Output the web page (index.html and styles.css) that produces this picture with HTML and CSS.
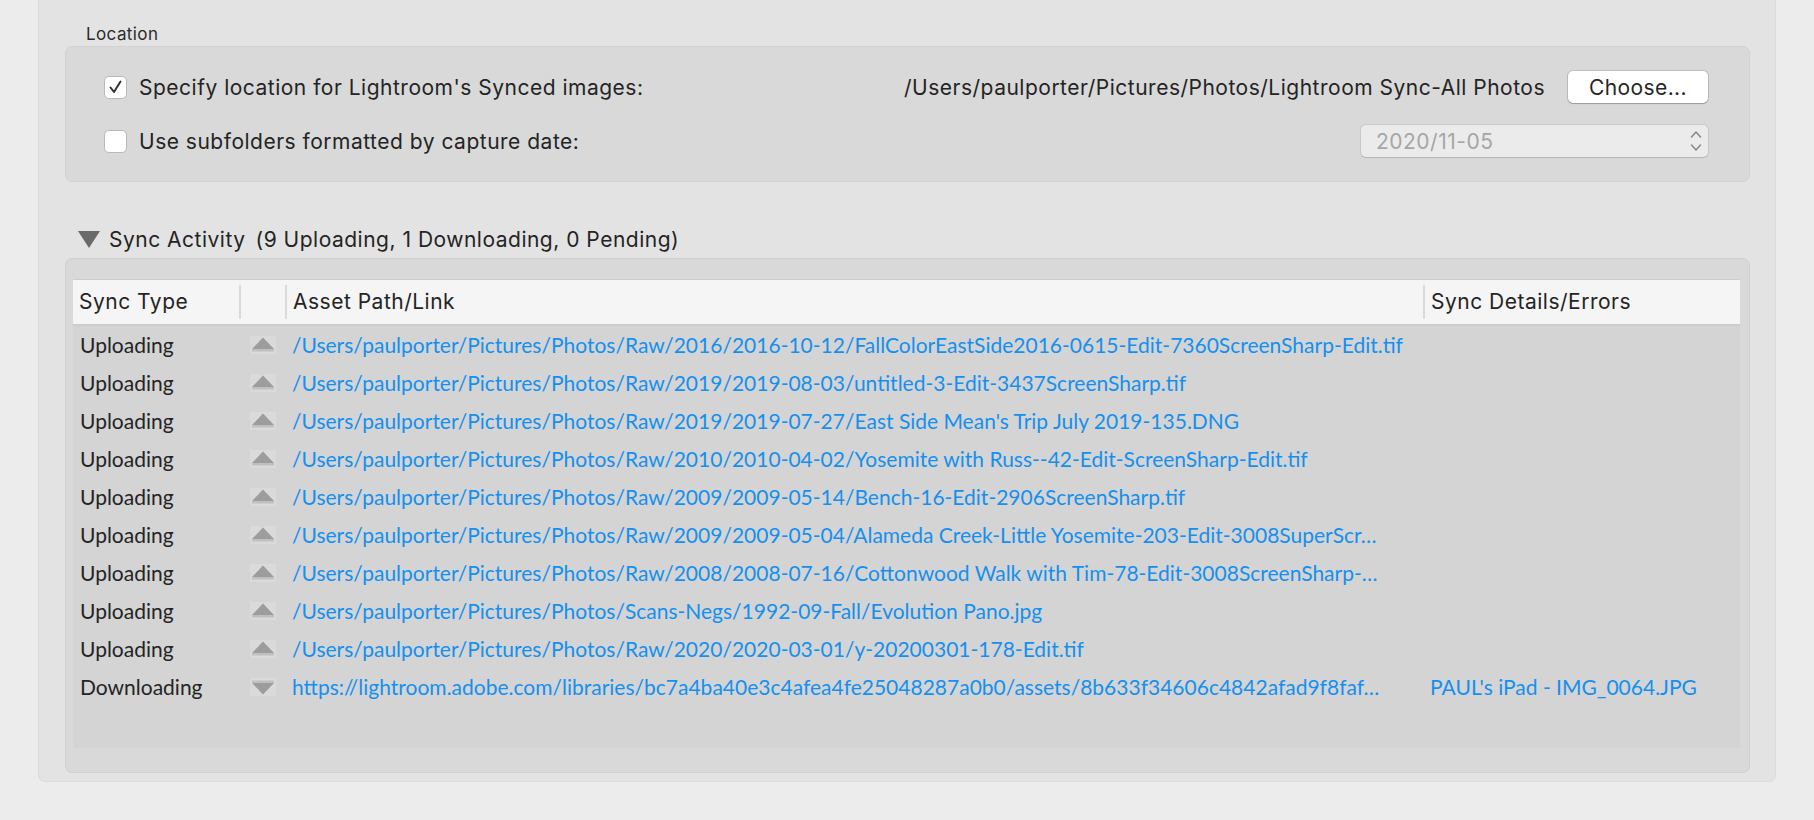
FILE: index.html
```html
<!DOCTYPE html>
<html lang="en">
<head>
    <meta charset="UTF-8">
    <title>Lightroom Sync Preferences</title>
    <link rel="stylesheet" href="styles.css">
</head>
<body>
    <div class="panel">
        <div class="group_label">Location</div>
        <div class="location_box">
            <div class="loc_row">
                <label class="check_item">
                    <span class="checkbox checked">
                        <svg width="15" height="14" viewBox="0 0 15 14"><path d="M2.5 7.5 L6 12 L12.5 1.5" fill="none" stroke="#2b2b2b" stroke-width="1.9" stroke-linecap="round" stroke-linejoin="round"/></svg>
                    </span>
                    Specify location for Lightroom's Synced images:
                </label>
                <div class="loc_right">
                    <span class="loc_path">/Users/paulporter/Pictures/Photos/Lightroom Sync-All Photos</span>
                    <button class="btn">Choose...</button>
                </div>
            </div>
            <div class="loc_row">
                <label class="check_item">
                    <span class="checkbox"></span>
                    Use subfolders formatted by capture date:
                </label>
                <div class="select">
                    <span>2020/11-05</span>
                    <svg width="12" height="22" viewBox="0 0 12 22"><path d="M1.5 7 L6 2 L10.5 7 M1.5 15 L6 20 L10.5 15" fill="none" stroke="#8a8a8a" stroke-width="1.6" stroke-linecap="round" stroke-linejoin="round"/></svg>
                </div>
            </div>
        </div>

        <div class="activity_head">
            <svg class="disclosure" width="22" height="17" viewBox="0 0 22 17"><path d="M0 0 H22 L11 17 Z" fill="#6a6a6a"/></svg>
            <span class="activity_title">Sync Activity</span>
            <span>(9 Uploading, 1 Downloading, 0 Pending)</span>
        </div>

        <div class="activity_box">
            <div class="sync_table">
                <div class="thead">
                    <div class="th">Sync Type</div>
                    <div class="th"></div>
                    <div class="th">Asset Path/Link</div>
                    <div class="th">Sync Details/Errors</div>
                </div>
                <div class="tbody" id="rows"></div>
            </div>
        </div>
    </div>

    <script>
        const rows = [
            ['up', '/Users/paulporter/Pictures/Photos/Raw/2016/2016-10-12/FallColorEastSide2016-0615-Edit-7360ScreenSharp-Edit.tif', ''],
            ['up', '/Users/paulporter/Pictures/Photos/Raw/2019/2019-08-03/untitled-3-Edit-3437ScreenSharp.tif', ''],
            ['up', "/Users/paulporter/Pictures/Photos/Raw/2019/2019-07-27/East Side Mean's Trip July 2019-135.DNG", ''],
            ['up', '/Users/paulporter/Pictures/Photos/Raw/2010/2010-04-02/Yosemite with Russ--42-Edit-ScreenSharp-Edit.tif', ''],
            ['up', '/Users/paulporter/Pictures/Photos/Raw/2009/2009-05-14/Bench-16-Edit-2906ScreenSharp.tif', ''],
            ['up', '/Users/paulporter/Pictures/Photos/Raw/2009/2009-05-04/Alameda Creek-Little Yosemite-203-Edit-3008SuperScr\u2026', ''],
            ['up', '/Users/paulporter/Pictures/Photos/Raw/2008/2008-07-16/Cottonwood Walk with Tim-78-Edit-3008ScreenSharp-\u2026', ''],
            ['up', '/Users/paulporter/Pictures/Photos/Scans-Negs/1992-09-Fall/Evolution Pano.jpg', ''],
            ['up', '/Users/paulporter/Pictures/Photos/Raw/2020/2020-03-01/y-20200301-178-Edit.tif', ''],
            ['down', 'https://lightroom.adobe.com/libraries/bc7a4ba40e3c4afea4fe25048287a0b0/assets/8b633f34606c4842afad9f8faf\u2026', "PAUL's iPad - IMG_0064.JPG"]
        ];

        const upIcon = '<svg width="26" height="18" viewBox="0 0 26 18"><rect width="26" height="18" fill="#dadada"/><path d="M13 1.5 L24 13 H2 Z" fill="#9d9d9d"/><rect x="2" y="13" width="22" height="2.5" fill="#c0c0c0"/></svg>';
        const downIcon = '<svg width="26" height="18" viewBox="0 0 26 18"><rect width="26" height="18" fill="#dadada"/><rect x="2" y="2.5" width="22" height="2.5" fill="#c0c0c0"/><path d="M2 5 H24 L13 16.5 Z" fill="#9d9d9d"/></svg>';

        const tbody = document.getElementById('rows');
        rows.forEach(r => {
            const row = document.createElement('div');
            row.className = 'tr';
            row.innerHTML =
                '<div class="td">' + (r[0] === 'up' ? 'Uploading' : 'Downloading') + '</div>' +
                '<div class="td icon">' + (r[0] === 'up' ? upIcon : downIcon) + '</div>' +
                '<div class="td link">' + r[1] + '</div>' +
                '<div class="td link">' + r[2] + '</div>';
            tbody.appendChild(row);
        });
    </script>
</body>
</html>
```

FILE: styles.css
```css
* {
    margin: 0;
    padding: 0;
    box-sizing: border-box;
}

body {
    background-color: #ececec;
    font-family: Inter, "Liberation Sans", Arial, sans-serif;
    font-size: 21px;
    letter-spacing: 0.5px;
    color: #242424;
}

.panel {
    width: 1738px;
    margin-left: 38px;
    height: 782px;
    padding: 22px 25px 9px 26px;
    background-color: #e3e3e3;
    border: 1px solid #dcdcdc;
    border-top: none;
    border-radius: 0 0 7px 7px;
}

.group_label {
    height: 24px;
    line-height: 24px;
    padding-left: 21px;
    font-size: 17px;
    letter-spacing: 0.4px;
    color: #2a2a2a;
}

.location_box {
    height: 136px;
    padding: 24px 41px 0 38px;
    background-color: #d9d9d9;
    border: 1px solid #d2d2d2;
    border-radius: 7px;
    display: flex;
    flex-direction: column;
    gap: 22px;
}

.loc_row {
    height: 32px;
    display: flex;
    align-items: center;
    justify-content: space-between;
}

.check_item {
    display: flex;
    align-items: center;
    gap: 12px;
}

.checkbox {
    width: 23px;
    height: 23px;
    background-color: #fff;
    border: 1px solid #b9b9b9;
    border-radius: 5px;
    display: flex;
    align-items: center;
    justify-content: center;
}

.loc_right {
    display: flex;
    align-items: center;
    gap: 23px;
}

.btn {
    width: 140px;
    height: 32px;
    font-family: Inter, "Liberation Sans", Arial, sans-serif;
    font-size: 21px;
    letter-spacing: 0.4px;
    color: #262626;
    background-color: #fff;
    border: none;
    border-radius: 5px;
    box-shadow: 0 0 0 1px rgba(0, 0, 0, 0.13), 0 1px 1px rgba(0, 0, 0, 0.18);
}

.select {
    width: 347px;
    height: 32px;
    padding: 0 6px 0 15px;
    background-color: #ebebeb;
    border-radius: 5px;
    box-shadow: 0 0 0 1px rgba(0, 0, 0, 0.07), 0 1px 1px rgba(0, 0, 0, 0.1);
    display: flex;
    align-items: center;
    justify-content: space-between;
    color: #a6a6a6;
}

.activity_head {
    margin-top: 45px;
    height: 24px;
    padding-left: 13px;
    display: flex;
    align-items: center;
}

.disclosure {
    margin-right: 9px;
}

.activity_title {
    margin-right: 10px;
}

.activity_box {
    margin-top: 7px;
    height: 515px;
    padding: 20px 9px 24px 7px;
    background-color: #d9d9d9;
    border: 1px solid #d0d0d0;
    border-radius: 7px;
}

.sync_table {
    height: 100%;
    background-color: #d4d4d4;
    border-top: 1px solid #cccccc;
}

.thead,
.tr {
    display: grid;
    grid-template-columns: 166px 46px 1138px 1fr;
}

.thead {
    height: 46px;
    background-color: #f5f5f5;
    border-bottom: 2px solid #cdcdcd;
    align-items: center;
}

.th {
    height: 34px;
    line-height: 34px;
    padding-left: 6px;
    white-space: nowrap;
}

.th + .th {
    border-left: 2px solid #dadada;
}

.tr {
    height: 38px;
    align-items: center;
    font-family: Lato, "Liberation Sans", sans-serif;
    font-size: 21px;
    letter-spacing: 0;
    padding-bottom: 1px;
}

.td {
    padding-left: 7px;
    white-space: nowrap;
    overflow: hidden;
    text-overflow: ellipsis;
}

.td.icon {
    padding-left: 11px;
    display: flex;
    align-items: center;
}

.td.link {
    padding-left: 7px;
    color: #1590ef;
}
```
